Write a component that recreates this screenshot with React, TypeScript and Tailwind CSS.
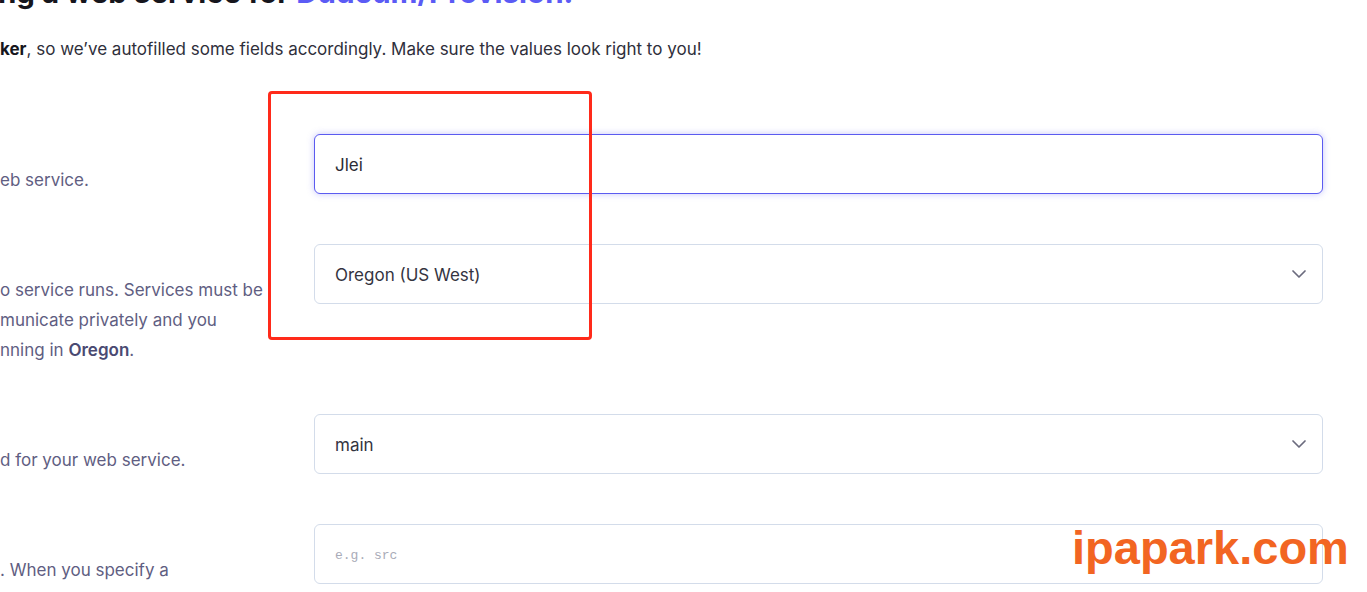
import React from "react";
import { ChevronDown } from "lucide-react";

function Row({
  lines,
  children,
}: {
  lines: React.ReactNode[];
  children: React.ReactNode;
}) {
  return (
    <div className="flex gap-[44px]">
      <div className="w-[270px] shrink-0 pt-[31px] text-[17px] leading-[30px] text-[#5f5e82] whitespace-nowrap overflow-hidden">
        {lines.map((l, i) => (
          <div key={i}>{l}</div>
        ))}
      </div>
      <div className="w-[1009px] shrink-0">{children}</div>
    </div>
  );
}

function SelectBox({ value }: { value: string }) {
  return (
    <div className="h-[60px] rounded-[6px] border border-[#d3dcea] bg-white flex items-center justify-between pl-[20px] pr-[11px] text-[17px] text-[#34343f]">
      <span className="pt-[4px]">{value}</span>
      <ChevronDown size={24} strokeWidth={1.75} className="text-[#6b6b7e]" />
    </div>
  );
}

export default function App() {
  return (
    <div
      className="relative w-[1367px] h-[592px] overflow-hidden bg-white"
      style={{ fontFamily: "Inter, 'Noto Sans', sans-serif" }}
    >
      <h1 className="mt-[-26px] ml-[-2px] text-[29.5px] leading-[36px] font-bold text-[#16161d] whitespace-nowrap">
        ng a web service for{" "}
        <span className="text-[#5b5bf5]">Dudeum/Provision.</span>
      </h1>

      <p className="mt-[26px] text-[17px] leading-[26px] text-[#2f2f3b] whitespace-nowrap">
        <span className="font-bold text-[#16161d]">ker</span>, so we’ve autofilled
        some fields accordingly. Make sure the values look right to you!
      </p>

      <div className="mt-[72px] flex flex-col gap-[49px]">
        <Row lines={["eb service."]}>
          <div className="h-[60px] rounded-[6px] border border-[#5b5bf0] bg-white flex items-center pl-[20px] text-[17px] text-[#2c2c36] shadow-[0_0_7px_rgba(91,91,240,0.35)]">
            <span className="pt-[4px]">Jlei</span>
          </div>
        </Row>

        <Row
          lines={[
            "o service runs. Services must be",
            "municate privately and you",
            <span key="o">
              nning in <span className="font-semibold text-[#4a4a72]">Oregon</span>.
            </span>,
          ]}
        >
          <SelectBox value="Oregon (US West)" />
        </Row>

        <Row lines={["d for your web service."]}>
          <SelectBox value="main" />
        </Row>

        <Row lines={[". When you specify a"]}>
          <div
            className="h-[60px] rounded-[6px] border border-[#d3dcea] bg-white flex items-center pl-[20px] text-[13px] text-[#a9abb8]"
            style={{ fontFamily: "'Liberation Mono', monospace" }}
          >
            <span className="pt-[4px]">e.g. src</span>
          </div>
        </Row>
      </div>

      <div className="absolute left-[268px] top-[91px] w-[324px] h-[249px] border-[3px] border-[#ff2a1a] rounded-[4px] pointer-events-none" />

      <div
        className="absolute left-[1072px] top-[520px] text-[47px] leading-[56px] font-bold text-[#f26522] whitespace-nowrap pointer-events-none"
        style={{ fontFamily: "'Liberation Sans', Arial, sans-serif" }}
      >
        ipapark.com
      </div>
    </div>
  );
}
